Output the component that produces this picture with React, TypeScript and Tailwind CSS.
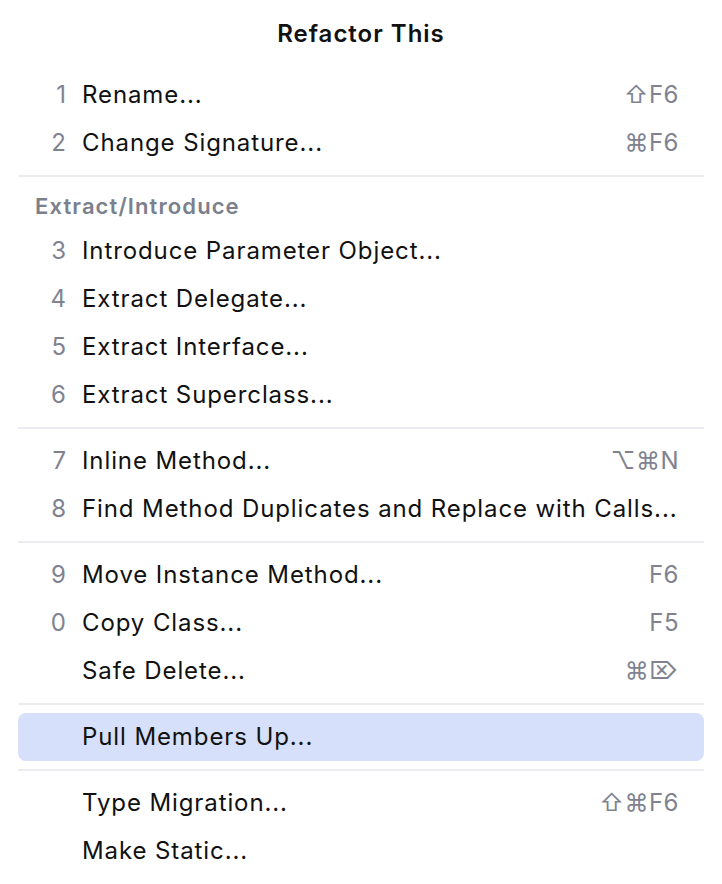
type Item = {
  num?: string;
  label: string;
  keys?: string;
  active?: boolean;
};

type Group = {
  header?: string;
  items: Item[];
};

const groups: Group[] = [
  {
    items: [
      { num: "1", label: "Rename...", keys: "⇧F6" },
      { num: "2", label: "Change Signature...", keys: "⌘F6" },
    ],
  },
  {
    header: "Extract/Introduce",
    items: [
      { num: "3", label: "Introduce Parameter Object..." },
      { num: "4", label: "Extract Delegate..." },
      { num: "5", label: "Extract Interface..." },
      { num: "6", label: "Extract Superclass..." },
    ],
  },
  {
    items: [
      { num: "7", label: "Inline Method...", keys: "⌥⌘N" },
      { num: "8", label: "Find Method Duplicates and Replace with Calls..." },
    ],
  },
  {
    items: [
      { num: "9", label: "Move Instance Method...", keys: "F6" },
      { num: "0", label: "Copy Class...", keys: "F5" },
      { label: "Safe Delete...", keys: "⌘⌦" },
    ],
  },
  {
    items: [{ label: "Pull Members Up...", active: true }],
  },
  {
    items: [
      { label: "Type Migration...", keys: "⇧⌘F6" },
      { label: "Make Static..." },
    ],
  },
];

const Row = ({ item }: { item: Item }) => (
  <div
    className={`flex items-center h-12 pl-[16px] pr-[25px] rounded-lg ${
      item.active ? "bg-[#d6e0fa]" : ""
    }`}
  >
    <span className="w-[32px] text-right text-[#80838f]">{item.num}</span>
    <span className="ml-[16px] flex-1 text-[#111111] whitespace-nowrap tracking-[0.9px]">
      {item.label}
    </span>
    {item.keys && (
      <span className="text-[#80838f] whitespace-nowrap tracking-[0.5px]">
        {item.keys}
      </span>
    )}
  </div>
);

export default function App() {
  return (
    <div
      className="w-[722px] h-[884px] bg-white overflow-hidden px-[18px] text-[24px] leading-none"
      style={{ fontFamily: 'Inter, "DejaVu Sans", sans-serif' }}
    >
      {/* Title */}
      <div className="h-[71px] pb-[4px] flex items-center justify-center font-semibold text-[24px] tracking-[1px] text-[#111111]">
        Refactor This
      </div>

      {groups.map((g, gi) => (
        <div key={gi}>
          {gi > 0 && <div className="my-[8px] h-[2px] bg-[#ebebf0]" />}
          {g.header && (
            <div className="h-[42px] pl-[17px] flex items-center font-semibold text-[22px] tracking-[1.1px] text-[#7c7f8c]">
              {g.header}
            </div>
          )}
          {g.items.map((item, i) => (
            <Row key={i} item={item} />
          ))}
        </div>
      ))}
    </div>
  );
}
